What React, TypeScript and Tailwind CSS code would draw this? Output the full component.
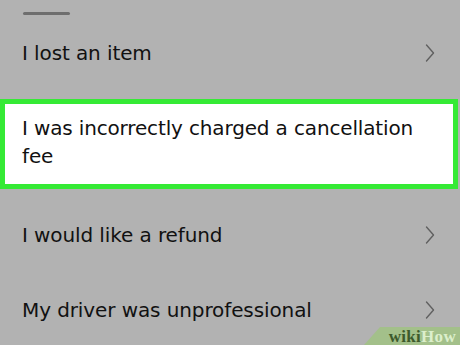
import React from "react";

const Chevron = () => (
  <svg width="10" height="18" viewBox="0 0 10 18" className="shrink-0">
    <path d="M1.5 1 L8.5 9 L1.5 17" fill="none" stroke="#606060" strokeWidth="1.4" strokeLinecap="round" strokeLinejoin="round" />
  </svg>
);

const Row = ({ text }: { text: string }) => (
  <div className="h-[75px] flex items-center justify-between pl-[22px] pr-[25px]">
    <span className="text-[20px] leading-[28px] text-[#111] tracking-[-0.1px]">{text}</span>
    <Chevron />
  </div>
);

export default function App() {
  return (
    <div
      className="relative w-[460px] h-[345px] overflow-hidden bg-[#b2b2b2]"
      style={{ fontFamily: '"DejaVu Sans", sans-serif' }}
    >
      <div className="pt-[12px] pl-[23px]">
        <div className="w-[47px] h-[3px] bg-[#6e6e6e] rounded-sm" />
      </div>
      <Row text="I lost an item" />
      <div className="mt-[9px] w-[458px] h-[90px] border-[5px] border-[#35ea35] bg-white pl-[17px] pt-[10px]">
        <div className="text-[20px] leading-[28px] text-[#111] tracking-[-0.15px]">
          I was incorrectly charged a cancellation
          <br />
          fee
        </div>
      </div>
      <div className="mt-[8px]">
        <Row text="I would like a refund" />
        <Row text="My driver was unprofessional" />
      </div>
      <div className="absolute right-0 bottom-0 w-[96px] h-[18px]">
        <svg className="absolute inset-0" width="96" height="18" viewBox="0 0 96 18">
          <polygon points="16,0 96,0 96,18 0,18" fill="#a3c08a" />
        </svg>
        <div
          className="absolute right-[4px] top-[1px] text-[17px] font-bold leading-[17px] tracking-[0.3px]"
          style={{ fontFamily: '"Liberation Serif", serif' }}
        >
          <span className="text-[#3d5a2c]">wiki</span>
          <span className="text-[#dcefcc]">How</span>
        </div>
      </div>
    </div>
  );
}
